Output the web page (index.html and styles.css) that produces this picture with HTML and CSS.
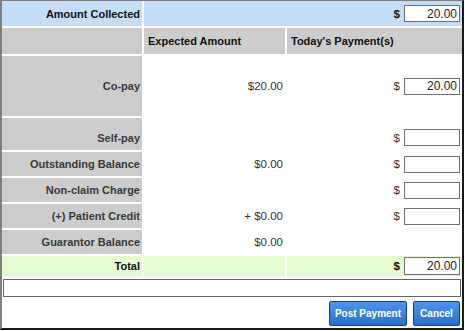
FILE: index.html
```html
<!DOCTYPE html>
<html>
<head>
<meta charset="utf-8">
<link rel="stylesheet" href="styles.css">
</head>
<body>
<div class="frame">
  <div class="grid">
    <div class="cell lbl blue strong">Amount Collected</div>
    <div class="cell pay blue wide"><span class="cur b">$</span><input class="amt" type="text" value="20.00"></div>

    <div class="cell head"></div>
    <div class="cell head hd">Expected Amount</div>
    <div class="cell head hd">Today's Payment(s)</div>

    <div class="cell lbl gray">Co-pay</div>
    <div class="cell val">$20.00</div>
    <div class="cell pay"><span class="cur">$</span><input class="amt" type="text" value="20.00"></div>

    <div class="cell lbl gray low">Self-pay</div>
    <div class="cell val low"></div>
    <div class="cell pay low"><span class="cur">$</span><input class="amt" type="text" value=""></div>

    <div class="cell lbl gray">Outstanding Balance</div>
    <div class="cell val">$0.00</div>
    <div class="cell pay"><span class="cur">$</span><input class="amt" type="text" value=""></div>

    <div class="cell lbl gray">Non-claim Charge</div>
    <div class="cell val"></div>
    <div class="cell pay"><span class="cur">$</span><input class="amt" type="text" value=""></div>

    <div class="cell lbl gray">(+) Patient Credit</div>
    <div class="cell val">+ $0.00</div>
    <div class="cell pay"><span class="cur">$</span><input class="amt" type="text" value=""></div>

    <div class="cell lbl gray">Guarantor Balance</div>
    <div class="cell val">$0.00</div>
    <div class="cell pay"></div>

    <div class="cell lbl green strong">Total</div>
    <div class="cell green"></div>
    <div class="cell pay green"><span class="cur b">$</span><input class="amt tall" type="text" value="20.00"></div>
  </div>
  <input class="note" type="text" value="">
  <div class="actions">
    <button class="btn post">Post Payment</button>
    <button class="btn cancel">Cancel</button>
  </div>
</div>
</body>
</html>
```

FILE: styles.css
```css
html, body {
  margin: 0;
  padding: 0;
  background: #ffffff;
}
body {
  font-family: "Liberation Sans", Arial, sans-serif;
  font-size: 11px;
  color: #333333;
}
.frame {
  box-sizing: border-box;
  width: 464px;
  height: 330px;
  border-left: 2px solid #7f7f7f;
  border-top: 1px solid #7f7f7f;
  border-right: 2px solid #1a1a1a;
  border-bottom: 2px solid #1a1a1a;
  display: flex;
  flex-direction: column;
}
.grid {
  display: grid;
  grid-template-columns: 140px 141px 175px;
  grid-template-rows: 25px 26px 60px 32px 24px 24px 24px 24px 20px;
  gap: 2px;
}
.cell {
  display: flex;
  align-items: center;
  min-width: 0;
}
.lbl {
  justify-content: flex-end;
  padding-right: 2px;
  font-weight: bold;
  color: #3a3a3a;
}
.strong { color: #111111; }
.blue { background: #c5def8; }
.gray { background: #cccccc; }
.green { background: #e5fcd0; }
.head {
  background: #cccccc;
}
.hd {
  padding-left: 4px;
  font-weight: bold;
  color: #111111;
}
.wide { grid-column: span 2; }
.val {
  justify-content: flex-end;
  padding-right: 2px;
  font-size: 11.5px;
  color: #333333;
}
.pay {
  justify-content: flex-end;
  padding-right: 2px;
}
.low { padding-top: 7px; align-items: center; }
.cur {
  font-size: 11.5px;
  color: #333333;
  margin-right: 4px;
}
.cur.b { font-weight: bold; color: #111111; }
.amt {
  box-sizing: border-box;
  width: 56px;
  height: 17px;
  margin: 0;
  padding: 0 2px 0 2px;
  border: 1px solid #707070;
  border-radius: 0;
  background: #ffffff;
  font-family: "Liberation Sans", Arial, sans-serif;
  font-size: 12px;
  color: #222222;
  text-align: right;
  outline: none;
}
.amt.tall { height: 18px; }
.note {
  box-sizing: border-box;
  display: block;
  width: 458px;
  height: 18px;
  margin: 3px 0 0 1px;
  padding: 0;
  border: 1px solid #666666;
  border-radius: 0;
  background: #ffffff;
  outline: none;
}
.actions {
  display: flex;
  justify-content: flex-end;
  gap: 6px;
  margin-top: 4px;
  padding-right: 2px;
}
.btn {
  box-sizing: border-box;
  height: 25px;
  margin: 0;
  padding: 0;
  border: 1px solid #1d3c6b;
  border-radius: 2px;
  background: linear-gradient(#4d96e8, #2a70cc);
  color: #ffffff;
  font-family: "Liberation Sans", Arial, sans-serif;
  font-size: 10px;
  font-weight: bold;
  white-space: nowrap;
  text-align: center;
  cursor: pointer;
}
.post { width: 78px; }
.cancel { width: 47px; }
```
